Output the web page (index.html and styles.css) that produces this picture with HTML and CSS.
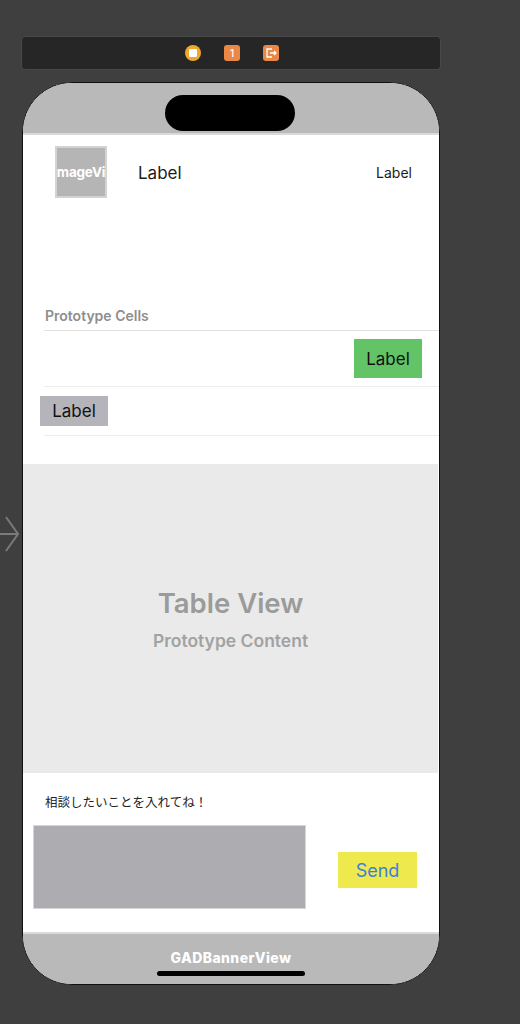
FILE: index.html
```html
<!DOCTYPE html>
<html>
<head>
<meta charset="utf-8">
<link rel="stylesheet" href="styles.css">
</head>
<body>
<svg class="entry-arrow" width="20" height="40" viewBox="0 0 20 40"><path d="M0 19 H18 M6 2 L18 19 L6 36" fill="none" stroke="#7a7a7a" stroke-width="2"/></svg>
<div class="toolbar">
  <span class="tb-circle"><span class="tb-sq"></span></span>
  <span class="tb-badge">1</span>
  <span class="tb-badge">
    <svg width="12" height="12" viewBox="0 0 12 12"><path d="M7 2 H2 V10 H7 M5 6 H11 M9 4 L11 6 L9 8" fill="none" stroke="#fff" stroke-width="1.3"/></svg>
  </span>
</div>
<div class="phone">
  <div class="status"><div class="island"></div></div>
  <div class="content">
    <div class="header">
      <div class="imageview"><span>mageVi</span></div>
      <div class="hdr-label">Label</div>
      <div class="hdr-right">Label</div>
    </div>
    <div class="section-title">Prototype Cells</div>
    <div class="cell cell-right"><div class="lbl lbl-green">Label</div></div>
    <div class="cell cell-left"><div class="lbl lbl-gray">Label</div></div>
    <div class="tableview">
      <div class="tv-title">Table View</div>
      <div class="tv-sub">Prototype Content</div>
    </div>
    <div class="input-area">
      <div class="prompt">相談したいことを入れてね！</div>
      <div class="input-row">
        <div class="textview"></div>
        <div class="send">Send</div>
      </div>
    </div>
  </div>
  <div class="banner">
    <div class="banner-text">GADBannerView</div>
    <div class="home"></div>
  </div>
</div>
</body>
</html>
```
FILE: styles.css
```css
html, body { margin: 0; padding: 0; }
body {
  background: #3f3f3f;
  width: 520px;
  height: 1024px;
  position: relative;
  overflow: hidden;
  font-family: Inter, "Noto Sans", sans-serif;
  padding-top: 36px;
  box-sizing: border-box;
}
.entry-arrow { position: absolute; left: 0; top: 515px; }
.toolbar {
  margin-left: 21px;
  width: 420px;
  height: 34px;
  box-sizing: border-box;
  background: #262626;
  border: 1px solid #494949;
  border-radius: 4px;
  display: flex;
  align-items: center;
  justify-content: center;
  gap: 23px;
  padding-left: 2px;
}
.tb-circle {
  width: 16px; height: 16px; border-radius: 50%;
  background: #efa82d;
  display: flex; align-items: center; justify-content: center;
}
.tb-sq { width: 8px; height: 8px; background: #fff; border-radius: 1px; }
.tb-badge {
  width: 16px; height: 16px; border-radius: 3px;
  background: #ec8846; color: #fff;
  font-size: 10px; font-weight: 500;
  display: flex; align-items: center; justify-content: center;
}
.phone {
  margin-top: 12px;
  margin-left: 22px;
  width: 418px;
  height: 903px;
  box-sizing: border-box;
  border: 1px solid #111;
  border-radius: 50px;
  overflow: hidden;
  background: #fff;
  display: flex;
  flex-direction: column;
}
.status {
  flex: none;
  background: #b9b9b9;
  border-bottom: 2px solid #dadada;
  display: flex;
  justify-content: center;
  padding-top: 12px;
  box-sizing: content-box;
  height: 38px;
}
.island {
  width: 130px; height: 36px; background: #000; border-radius: 18px;
  margin-left: -2px;
}
.content {
  flex: 1;
  display: flex;
  flex-direction: column;
  background: #fff;
}
.header {
  height: 163px;
  display: flex;
  align-items: flex-start;
  padding: 11px 27px 0 32px;
  box-sizing: border-box;
}
.imageview {
  width: 52px; height: 52px;
  flex: none;
  box-sizing: border-box;
  background: #b5b5b5;
  border: 2px solid #d3d3d3;
  display: flex; align-items: center; justify-content: center;
  color: #fff; font-weight: 700; font-size: 13.5px;
  letter-spacing: -0.2px;
  white-space: nowrap;
}
.hdr-label {
  margin-left: 31px;
  margin-top: 17px;
  font-size: 17px;
  color: #1c1c1c;
  flex: 1;
}
.hdr-right {
  margin-top: 18px;
  font-size: 14px;
  color: #1c1c1c;
}
.section-title {
  margin-left: 21px;
  padding-left: 1px;
  height: 33px;
  box-sizing: border-box;
  border-bottom: 1px solid #e2e2e2;
  font-size: 14px;
  font-weight: 600;
  color: #8e8e8e;
  padding-top: 9px;
}
.cell {
  margin-left: 21px;
  border-bottom: 1px solid #ececec;
  display: flex;
  box-sizing: border-box;
}
.cell-right { height: 56px; justify-content: flex-end; padding: 8px 17px 0 0; }
.cell-left { height: 49px; padding-top: 9px; }
.lbl {
  display: flex; align-items: center; justify-content: center;
  font-size: 17px; color: #111;
}
.lbl-green { width: 68px; height: 39px; background: #62c466; }
.lbl-gray { width: 68px; height: 30px; background: #b4b4ba; margin-left: -4px; }
.tableview {
  margin-top: 28px;
  height: 309px;
  flex: none;
  margin-right: 1px;
  background: #eaeaea;
  display: flex;
  flex-direction: column;
  align-items: center;
  justify-content: center;
  box-sizing: border-box;
}
.tv-title { font-size: 27.5px; font-weight: 600; color: #9b9b9b; line-height: 34px; }
.tv-sub { font-size: 17.5px; font-weight: 600; color: #a2a2a2; margin-top: 10px; line-height: 22px; }
.input-area { flex: 1; }
.prompt {
  margin: 21px 0 0 22px;
  font-family: "Noto Sans CJK JP", sans-serif;
  font-size: 12.5px;
  color: #222;
  line-height: 16px;
}
.input-row {
  display: flex;
  align-items: center;
  margin-top: 15px;
  padding-left: 10px;
}
.textview {
  width: 273px; height: 84px;
  flex: none;
  background: #adadb1;
  border: 1px solid #d6d6d8;
  box-sizing: border-box;
}
.send {
  margin-left: 32px;
  margin-top: 6px;
  width: 79px; height: 36px;
  background: #eee94c;
  color: #3d7fe0;
  font-size: 18px;
  display: flex; align-items: center; justify-content: center;
}
.banner {
  flex: none;
  height: 50px;
  background: #b9b9b9;
  border-top: 2px solid #dadada;
  display: flex;
  flex-direction: column;
  align-items: center;
}
.banner-text {
  margin-top: 16px;
  color: #fff;
  font-weight: 800;
  font-size: 14px;
  letter-spacing: 0.4px;
  line-height: 16px;
}
.home {
  margin-top: 5px;
  width: 148px; height: 5px; border-radius: 3px; background: #000;
}
```
